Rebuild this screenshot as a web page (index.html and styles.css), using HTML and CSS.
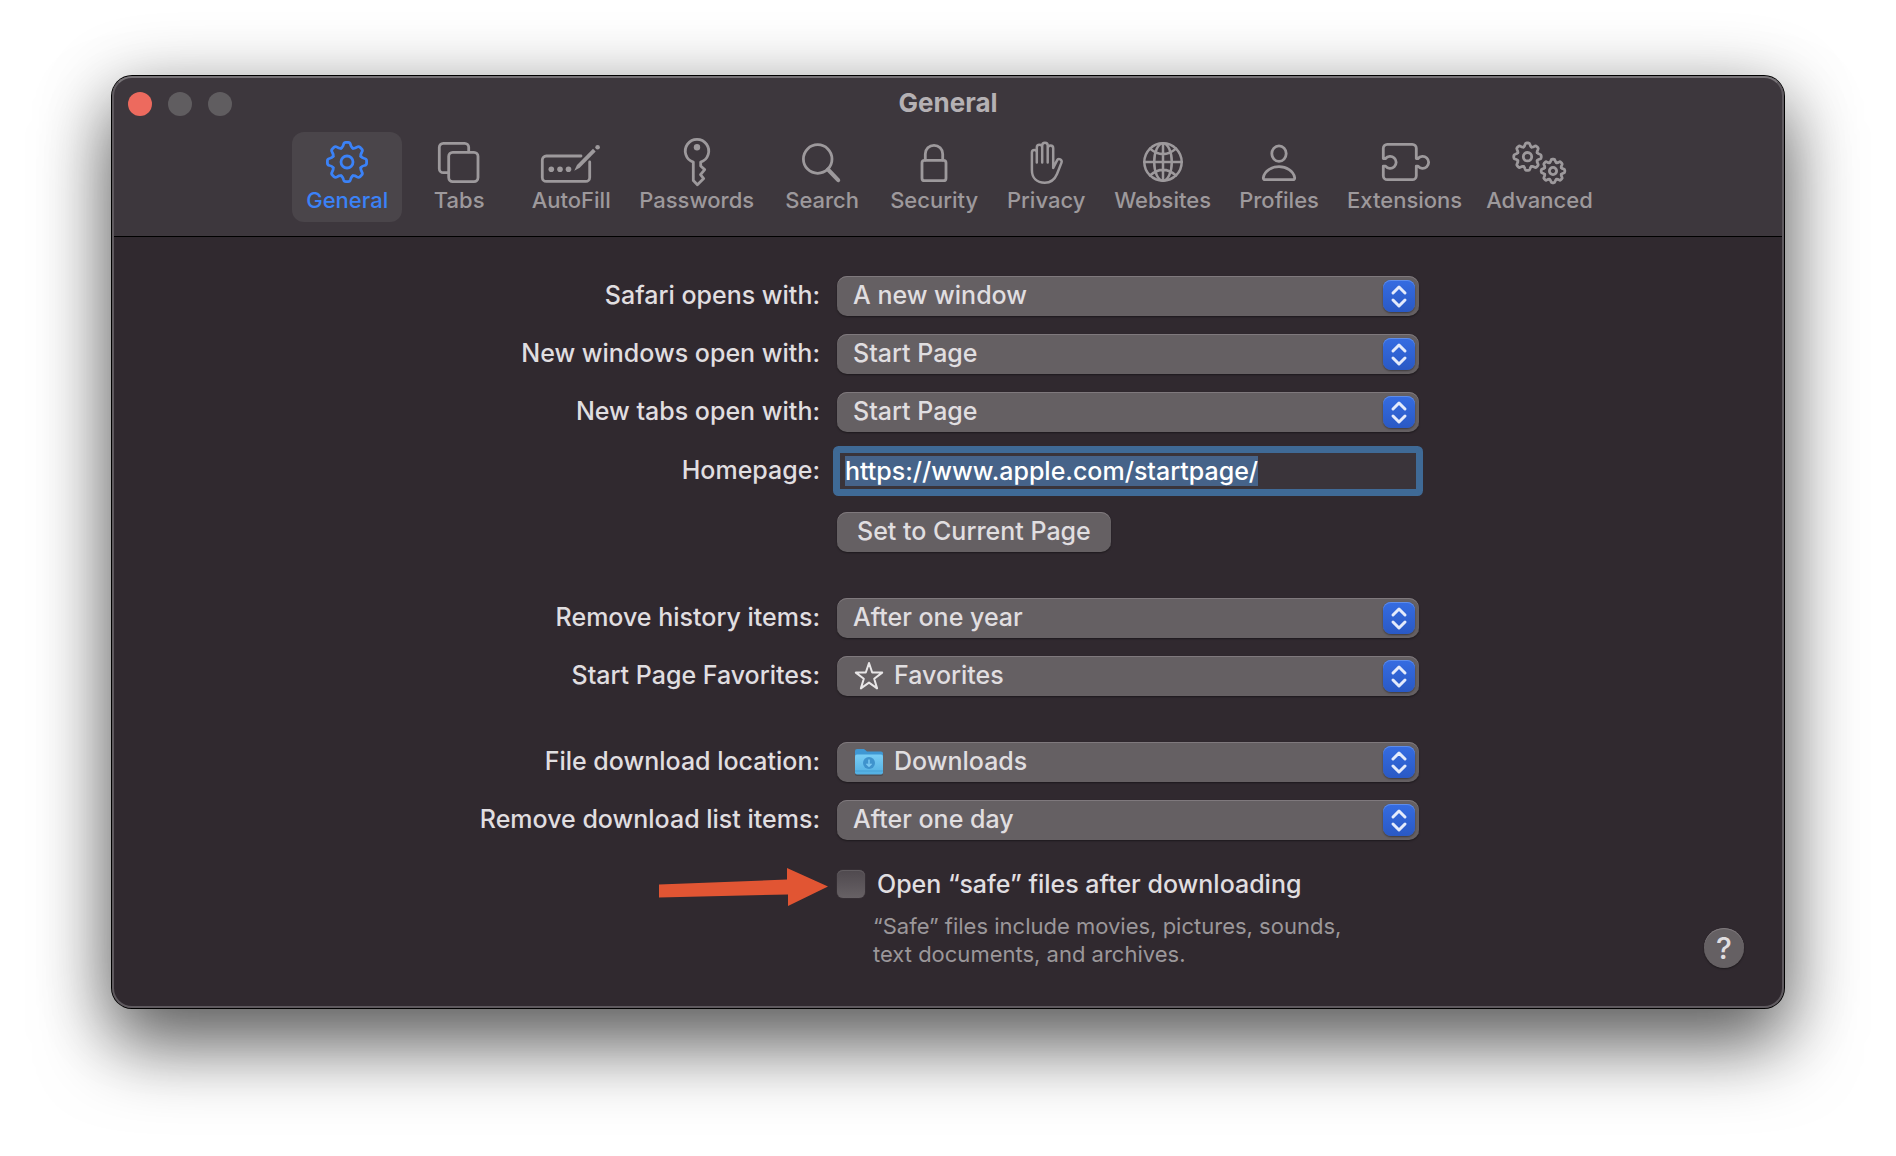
FILE: index.html
```html
<!DOCTYPE html>
<html lang="en">
<head>
<meta charset="utf-8">
<meta name="viewport" content="width=device-width, initial-scale=1">
<title>General</title>
<link rel="stylesheet" href="styles.css">
</head>
<body>
<svg class="defs" aria-hidden="true">
  <defs>
    <path id="tooth" d="M-5.7-13.8Q-4-15-3.5-17.5Q-3-19.6-1.2-19.6H1.2Q3-19.6 3.5-17.5Q4-15 5.7-13.8" vector-effect="non-scaling-stroke"/>
    <g id="gear">
      <use href="#tooth"/>
      <use href="#tooth" transform="rotate(45)"/>
      <use href="#tooth" transform="rotate(90)"/>
      <use href="#tooth" transform="rotate(135)"/>
      <use href="#tooth" transform="rotate(180)"/>
      <use href="#tooth" transform="rotate(225)"/>
      <use href="#tooth" transform="rotate(270)"/>
      <use href="#tooth" transform="rotate(315)"/>
      <circle r="6" vector-effect="non-scaling-stroke"/>
    </g>
    <path id="chevrons" d="M10 13l6-6 6 6M10 20l6 6 6-6"/>
  </defs>
</svg>

<main class="window">
  <header class="toolbar">
    <div class="titlebar">
      <div class="lights">
        <button class="light light-close" type="button" aria-label="Close"></button>
        <button class="light" type="button" aria-label="Minimize"></button>
        <button class="light" type="button" aria-label="Zoom"></button>
      </div>
      <h1 class="title">General</h1>
    </div>
    <nav class="tabs">
      <button class="tab tab-active" type="button">
        <svg class="icon" viewBox="0 0 60 50"><use href="#gear" transform="translate(30 26)"/></svg>
        General
      </button>
      <button class="tab" type="button">
        <svg class="icon" viewBox="0 0 60 50"><path d="M19 36.7h-4.7a4 4 0 0 1-4-4V11.3a4 4 0 0 1 4-4h21.4a4 4 0 0 1 4 4v4.500"/><rect x="19.7" y="16.3" width="29.3" height="29.3" rx="4"/></svg>
        Tabs
      </button>
      <button class="tab" type="button">
        <svg class="icon" viewBox="0 0 60 50"><path d="M40 20H5.3a4 4 0 0 0-4 4v17.4a4 4 0 0 0 4 4h39.4a4 4 0 0 0 4-4V26"/><g class="solid"><circle cx="10.3" cy="33.3" r="2.8"/><circle cx="19" cy="33.3" r="2.8"/><circle cx="27.500" cy="33.3" r="2.8"/><path d="M33.3 34.7L36 29 52 12.8l2.7 2.7-16 16.2z"/><circle cx="56.6" cy="11.2" r="2.3"/></g></svg>
        AutoFill
      </button>
      <button class="tab" type="button">
        <svg class="icon" viewBox="0 0 60 50"><path d="M26.3 26.1a11.7 11.7 0 1 1 7.4 0V30l4 3.6-4.2 5 3.2 4-6.3 6.2-4.1-4.2z"/><circle class="solid" cx="30" cy="11.3" r="3.2"/></svg>
        Passwords
      </button>
      <button class="tab" type="button">
        <svg class="icon" viewBox="0 0 60 50"><circle cx="25.7" cy="23" r="14.3"/><path class="thick" d="M36 33.500l10.2 10.7"/></svg>
        Search
      </button>
      <button class="tab" type="button">
        <svg class="icon" viewBox="0 0 60 50"><rect x="18" y="24.3" width="24" height="20.4" rx="2.500"/><path d="M21.3 24v-6a8.7 8.7 0 0 1 17.4 0v6"/></svg>
        Security
      </button>
      <button class="tab" type="button">
        <svg class="icon" viewBox="0 0 60 50"><path class="thin" d="M20.8 26.500v-10a2.4 2.4 0 0 0-4.9 0V34c0 8 5 12.7 12.9 12.7 5.7 0 9.7-2.7 12.2-8.7l4.500-11.4a2.500 2.500 0 0 0-4.6-2L37.2 32V12.3a2.7 2.7 0 0 0-5.500 0v14.2M31.7 12.3V9.500a2.7 2.7 0 0 0-5.500 0v17M26.2 11.500a2.7 2.7 0 0 0-5.4 0v6"/></svg>
        Privacy
      </button>
      <button class="tab" type="button">
        <svg class="icon" viewBox="0 0 60 50"><g class="thin"><circle cx="30" cy="26" r="18.7"/><ellipse cx="30" cy="26" rx="8.8" ry="18.7"/><path d="M30 7.3v37.4M11.3 26h37.4M17 12.6q13 11 26 0M17 39.4q13-11 26 0"/></g></svg>
        Websites
      </button>
      <button class="tab" type="button">
        <svg class="icon" viewBox="0 0 60 50"><ellipse cx="30" cy="17.6" rx="7.2" ry="7.8"/><path d="M16.3 43.7c-1.6 0-2.2-1-1.9-2.3C15.6 35 22.6 30.7 30 30.7S44.4 35 45.6 41.4c.3 1.3-.3 2.3-1.9 2.3z"/></svg>
        Profiles
      </button>
      <button class="tab" type="button">
        <svg class="icon" viewBox="0 0 60 50"><path d="M8.3 22.500V12.3a4 4 0 0 1 4-4h25a4 4 0 0 1 4 4v10.2H43a6 6 0 1 1 0 7.6h-1.7v9.6a4 4 0 0 1-4 4h-25a4 4 0 0 1-4-4v-9.6h2.2a6 6 0 1 0 0-7.6z"/></svg>
        Extensions
      </button>
      <button class="tab" type="button">
        <svg class="icon" viewBox="0 0 60 50"><use href="#gear" transform="translate(18.500 20.7) scale(.7)"/><use href="#gear" transform="translate(44 35) scale(.6)"/></svg>
        Advanced
      </button>
    </nav>
  </header>

  <div class="panel">
    <form class="form">
      <label class="label" for="opens">Safari opens with:</label>
      <div class="popup">
        <select id="opens"><option>A new window</option></select>
        <svg class="badge" viewBox="0 0 32 32"><use href="#chevrons"/></svg>
      </div>

      <label class="label" for="windows">New windows open with:</label>
      <div class="popup">
        <select id="windows"><option>Start Page</option></select>
        <svg class="badge" viewBox="0 0 32 32"><use href="#chevrons"/></svg>
      </div>

      <label class="label" for="newtabs">New tabs open with:</label>
      <div class="popup">
        <select id="newtabs"><option>Start Page</option></select>
        <svg class="badge" viewBox="0 0 32 32"><use href="#chevrons"/></svg>
      </div>

      <label class="label" for="homepage">Homepage:</label>
      <input class="field" id="homepage" type="text" value="https://www.apple.com/startpage/" spellcheck="false">

      <button class="push" type="button">Set to Current Page</button>

      <label class="label group" for="history">Remove history items:</label>
      <div class="popup group">
        <select id="history"><option>After one year</option></select>
        <svg class="badge" viewBox="0 0 32 32"><use href="#chevrons"/></svg>
      </div>

      <label class="label" for="favorites">Start Page Favorites:</label>
      <div class="popup popup-icon">
        <select id="favorites"><option>Favorites</option></select>
        <svg class="glyph star" viewBox="0 0 30 30"><path d="M15 2l3.2 9.500 10 .1-8 6.1 2.9 9.7L15 21.6l-8.1 5.8 2.9-9.7-8-6.1 10-.1z"/></svg>
        <svg class="badge" viewBox="0 0 32 32"><use href="#chevrons"/></svg>
      </div>

      <label class="label group" for="location">File download location:</label>
      <div class="popup popup-icon group">
        <select id="location"><option>Downloads</option></select>
        <svg class="glyph" viewBox="0 0 30 30">
          <defs><linearGradient id="folder" x1="0" y1="0" x2="0" y2="1"><stop offset="0" stop-color="#79cdf5"/><stop offset="1" stop-color="#52afe2"/></linearGradient></defs>
          <rect x="1" y="8" width="28" height="21" rx="2" fill="#3c3a40" opacity=".5"/>
          <path d="M1 4a2 2 0 0 1 2-2h7l3 2.500h14a2 2 0 0 1 2 2V12H1z" fill="#3f97d3"/>
          <rect x="1" y="7.500" width="28" height="20" rx="2" fill="url(#folder)"/>
          <path d="M1 24h28" stroke="#459fd4" stroke-width="1"/>
          <circle cx="15" cy="16" r="6" fill="#3f93cd"/>
          <path d="M15 12.500v6.500M12.500 16.700l2.500 2.500 2.500-2.500" fill="none" stroke="#7cc9f2" stroke-width="1.500"/>
        </svg>
        <svg class="badge" viewBox="0 0 32 32"><use href="#chevrons"/></svg>
      </div>

      <label class="label" for="dlist">Remove download list items:</label>
      <div class="popup">
        <select id="dlist"><option>After one day</option></select>
        <svg class="badge" viewBox="0 0 32 32"><use href="#chevrons"/></svg>
      </div>

      <div class="safe">
        <svg class="arrow" viewBox="0 0 169 38" aria-hidden="true"><path d="M0 16.500L128 11.500V0l41 18.500L129 38V26.500L0 29.500z"/></svg>
        <input class="check" id="safe" type="checkbox" aria-describedby="safe-hint">
        <label class="check-label" for="safe">Open “safe” files after downloading</label>
        <p class="hint" id="safe-hint">“Safe” files include movies, pictures, sounds,<br>text documents, and archives.</p>
      </div>
    </form>
    <button class="help" type="button" aria-label="Help">?</button>
  </div>
</main>
<script src="script.js"></script>
</body>
</html>
```
FILE: script.js
```js
// The homepage address starts focused with its whole text selected.
const homepage = document.getElementById("homepage");
homepage.focus();
homepage.select();
```
FILE: styles.css
```css
* {
  box-sizing: border-box;
}

body {
  margin: 0;
  padding: 76px 112px 148px;
  background: #fff;
  color: #e0dee0;
  font-family: Inter, "Liberation Sans", sans-serif;
  font-size: 25px;
  font-weight: 500;
  line-height: 32px;
}

button,
input,
select {
  margin: 0;
  padding: 0;
  border: 0;
  color: inherit;
  font: inherit;
}

.defs {
  display: block;
  width: 0;
  height: 0;
  position: absolute;
}

.window {
  position: relative;
  border-radius: 20px;
  background: #30292f;
  box-shadow:
    0 0 0 1px #000,
    0 40px 72px rgba(0, 0, 0, 0.5),
    0 12px 72px rgba(0, 0, 0, 0.3);
}

/* light rim just inside the window edge */
.window::after {
  content: "";
  position: absolute;
  inset: 0;
  border: 2px solid #5f5a5f;
  border-top-color: #777377;
  border-radius: 20px;
  pointer-events: none;
}

.toolbar {
  padding-bottom: 14px;
  border-bottom: 1px solid #000;
  border-radius: 20px 20px 0 0;
  background: #3d373d;
}

.titlebar {
  display: grid;
  grid-template-columns: 1fr auto 1fr;
  align-items: center;
  height: 56px;
  padding: 0 16px;
}

.lights {
  display: flex;
  gap: 16px;
}

.light {
  width: 24px;
  height: 24px;
  border-radius: 50%;
  background: #605d60;
}

.light-close {
  background: #ed6a5e;
}

.title {
  margin: 0;
  padding-bottom: 2px;
  color: #b5b1b4;
  font-size: 26px;
  font-weight: 700;
}

.tabs {
  display: flex;
  justify-content: center;
  gap: 2px;
}

.tab {
  display: flex;
  flex-direction: column;
  align-items: center;
  min-width: 110px;
  padding: 4px 11px 8px;
  border-radius: 12px;
  background: none;
  color: #9d999c;
  font-size: 22px;
  line-height: 28px;
}

.tab-active {
  background: #4a454a;
  color: #3b82f7;
}

.icon {
  width: 60px;
  height: 50px;
  overflow: visible;
  fill: none;
  stroke: currentColor;
  stroke-width: 2.8;
  stroke-linecap: round;
  stroke-linejoin: round;
}

.icon .thin {
  stroke-width: 2.5;
}

.icon .thick {
  stroke-width: 4;
}

.icon .solid {
  fill: currentColor;
  stroke: none;
}

.panel {
  display: grid;
  grid-template-columns: 1fr auto 1fr;
  padding: 39px 40px 40px;
}

.form {
  display: grid;
  grid-column: 2;
  grid-template-columns: 343px 582px;
  gap: 18px 17px;
  align-items: center;
}

.label {
  display: flex;
  justify-content: flex-end;
  padding-bottom: 2px;
  white-space: nowrap;
}

.group {
  margin-top: 28px;
}

.popup {
  position: relative;
  height: 40px;
}

.popup select {
  appearance: none;
  width: 100%;
  height: 40px;
  padding: 0 48px 2px 16px;
  border-radius: 10px;
  background: #656063;
  box-shadow: inset 0 1px #7f797d, 0 1px 2px rgba(0, 0, 0, 0.4);
}

.popup-icon select {
  padding-left: 57px;
}

.badge {
  position: absolute;
  top: 4px;
  right: 4px;
  width: 32px;
  height: 32px;
  border-radius: 8px;
  background: linear-gradient(#356ce2, #2a59c4);
  box-shadow: inset 0 1px #5f8dea, 0 1px 2px rgba(0, 0, 0, 0.4);
  fill: none;
  stroke: #e4ebfb;
  stroke-width: 3;
  stroke-linecap: round;
  stroke-linejoin: round;
  pointer-events: none;
}

.glyph {
  position: absolute;
  top: 5px;
  left: 17px;
  width: 30px;
  height: 30px;
  pointer-events: none;
}

.star {
  fill: none;
  stroke: #e8e6e7;
  stroke-width: 2;
  stroke-linejoin: round;
}

.field {
  width: 100%;
  height: 42px;
  padding: 0 5px;
  border: 3px solid #3f6a96;
  background: #3a343a;
  box-shadow: 0 0 0 4px #3f6a96;
  outline: 0;
  border-radius: 2px;
  color: #fff;
}

.field::selection {
  background: #466389;
  color: #fff;
}

.push {
  grid-column: 2;
  justify-self: start;
  height: 40px;
  margin-top: 2px;
  padding: 0 20px 2px;
  border-radius: 10px;
  background: #656063;
  box-shadow: inset 0 1px #7f797d, 0 1px 2px rgba(0, 0, 0, 0.4);
}

.safe {
  position: relative;
  display: grid;
  grid-column: 2;
  grid-template-columns: 28px 1fr;
  column-gap: 12px;
  align-items: center;
  margin-top: 12px;
}

.check {
  appearance: none;
  width: 28px;
  height: 28px;
  border-radius: 6px;
  background: linear-gradient(#4f494e, #676165);
  box-shadow: inset 0 1px #625d61, 0 0 1px #6b6669;
}

.check-label {
  line-height: 28px;
}

.hint {
  grid-column: 1 / -1;
  margin: 14px 0 0;
  padding-left: 36px;
  color: #9b979a;
  font-size: 22px;
  font-weight: 400;
  line-height: 28px;
}

/* callout pointing at the tick box */
.arrow {
  position: absolute;
  top: -2px;
  right: calc(100% + 9px);
  width: 169px;
  height: 38px;
  fill: #e15533;
}

.help {
  grid-column: 3;
  align-self: end;
  justify-self: end;
  width: 40px;
  height: 40px;
  border-radius: 50%;
  background: #656063;
  box-shadow: inset 0 1px #7f797d, 0 1px 2px rgba(0, 0, 0, 0.4);
  font-size: 30px;
  line-height: 40px;
}
```
